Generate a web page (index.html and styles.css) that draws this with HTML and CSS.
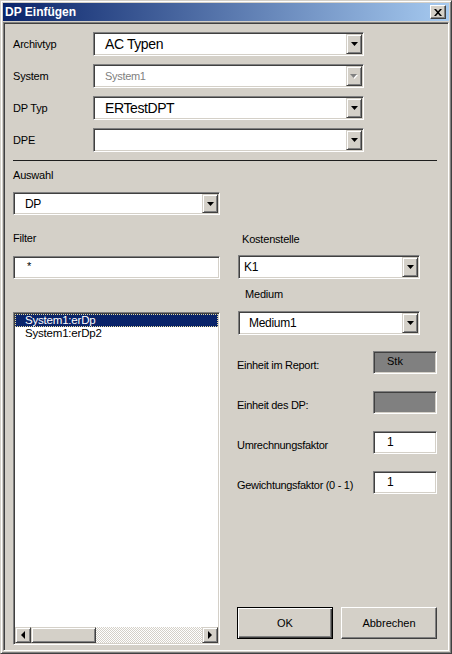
FILE: index.html
```html
<!DOCTYPE html>
<html lang="de">
<head>
  <meta charset="UTF-8">
  <meta name="viewport" content="width=device-width, initial-scale=1.0">
  <title>DP Einfügen</title>
  <link rel="stylesheet" href="styles.css">
</head>
<body>
  <div class="window">
    <div class="titlebar">
      <span class="title">DP Einfügen</span>
      <button type="button" class="close-btn">
        <svg width="8" height="7" viewBox="0 0 8 7"><path d="M0 0h2l2 2.3L6 0h2L5 3.5 8 7H6L4 4.7 2 7H0l3-3.5z" fill="#000"/></svg>
      </button>
    </div>

    <div class="client">
      <div class="field-row">
        <span class="field-label">Archivtyp</span>
        <div class="combo combo-wide">
          <span class="combo-value big">AC Typen</span>
          <span class="drop"><svg width="7" height="4" viewBox="0 0 7 4"><path d="M0 0h7L3.5 4z" fill="#000"/></svg></span>
        </div>
      </div>
      <div class="field-row">
        <span class="field-label">System</span>
        <div class="combo combo-wide">
          <span class="combo-value disabled">System1</span>
          <span class="drop"><svg width="8" height="5" viewBox="0 0 8 5"><path d="M1 1h7L4.5 5z" fill="#fff"/><path d="M0 0h7L3.5 4z" fill="#808080"/></svg></span>
        </div>
      </div>
      <div class="field-row">
        <span class="field-label">DP Typ</span>
        <div class="combo combo-wide">
          <span class="combo-value big">ERTestDPT</span>
          <span class="drop"><svg width="7" height="4" viewBox="0 0 7 4"><path d="M0 0h7L3.5 4z" fill="#000"/></svg></span>
        </div>
      </div>
      <div class="field-row">
        <span class="field-label">DPE</span>
        <div class="combo combo-wide">
          <span class="combo-value big"></span>
          <span class="drop"><svg width="7" height="4" viewBox="0 0 7 4"><path d="M0 0h7L3.5 4z" fill="#000"/></svg></span>
        </div>
      </div>

      <div class="separator"></div>

      <div class="lower">
        <div class="left-col">
          <span class="label label-auswahl">Auswahl</span>
          <div class="combo combo-dp">
            <span class="combo-value mid">DP</span>
            <span class="drop"><svg width="7" height="4" viewBox="0 0 7 4"><path d="M0 0h7L3.5 4z" fill="#000"/></svg></span>
          </div>
          <span class="label label-filter">Filter</span>
          <div class="edit filter-edit"><span class="edit-text">*</span></div>

          <div class="listbox">
            <div class="list-items">
              <div class="list-item selected">System1:erDp</div>
              <div class="list-item">System1:erDp2</div>
            </div>
            <div class="hscroll">
              <span class="scroll-btn"><i class="arrow-left"></i></span>
              <span class="scroll-thumb"></span>
              <span class="scroll-track"></span>
              <span class="scroll-btn"><i class="arrow-right"></i></span>
            </div>
          </div>
        </div>

        <div class="right-col">
          <span class="label label-kosten">Kostenstelle</span>
          <div class="combo combo-side combo-k1">
            <span class="combo-value mid">K1</span>
            <span class="drop"><svg width="7" height="4" viewBox="0 0 7 4"><path d="M0 0h7L3.5 4z" fill="#000"/></svg></span>
          </div>
          <span class="label label-medium">Medium</span>
          <div class="combo combo-side combo-medium">
            <span class="combo-value mid">Medium1</span>
            <span class="drop"><svg width="7" height="4" viewBox="0 0 7 4"><path d="M0 0h7L3.5 4z" fill="#000"/></svg></span>
          </div>

          <div class="value-row first">
            <span class="value-label">Einheit im Report:</span>
            <div class="edit value-box readonly"><span class="edit-text">Stk</span></div>
          </div>
          <div class="value-row">
            <span class="value-label">Einheit des DP:</span>
            <div class="edit value-box readonly"></div>
          </div>
          <div class="value-row">
            <span class="value-label">Umrechnungsfaktor</span>
            <div class="edit value-box"><span class="edit-text num">1</span></div>
          </div>
          <div class="value-row">
            <span class="value-label">Gewichtungsfaktor (0 - 1)</span>
            <div class="edit value-box"><span class="edit-text num">1</span></div>
          </div>

          <div class="buttons">
            <button type="button" class="btn btn-default">OK</button>
            <button type="button" class="btn">Abbrechen</button>
          </div>
        </div>
      </div>
    </div>
  </div>
</body>
</html>
```

FILE: styles.css
```css
* {
  box-sizing: border-box;
}
body {
  margin: 0;
  background: #d4d0c8;
  font-family: "Liberation Sans", Arial, sans-serif;
  font-size: 11px;
  color: #000;
}
.window {
  width: 452px;
  height: 654px;
  display: flex;
  flex-direction: column;
  border: 1px solid;
  border-color: #d4d0c8 #404040 #404040 #d4d0c8;
  box-shadow: inset 1px 1px #fff, inset -1px -1px #808080;
  padding: 2px;
  background: #d4d0c8;
}
.titlebar {
  height: 18px;
  flex: none;
  display: flex;
  align-items: center;
  justify-content: space-between;
  padding: 0 3px 0 2px;
  margin-bottom: 1px;
  background: linear-gradient(to right, #0a246a, #a6caf0);
}
.title {
  color: #fff;
  font-weight: bold;
  font-size: 12px;
}
.close-btn {
  width: 16px;
  height: 14px;
  padding: 0;
  display: flex;
  align-items: center;
  justify-content: center;
  background: #d4d0c8;
  border: 1px solid;
  border-color: #fff #404040 #404040 #fff;
  box-shadow: inset -1px -1px #808080;
}
.client {
  flex: 1;
  display: flex;
  flex-direction: column;
  border: 1px solid;
  border-color: #808080 #fff #fff #808080;
  box-shadow: inset 1px 1px #404040, inset -1px -1px #d4d0c8;
  padding: 9px 11px 5px 9px;
}

/* top rows */
.field-row {
  display: flex;
  align-items: center;
  height: 24px;
  margin-bottom: 8px;
}
.field-label {
  width: 80px;
  letter-spacing: -0.2px;
}
.label {
  display: block;
  line-height: 13px;
  letter-spacing: -0.2px;
}

/* classic sunken controls */
.combo, .edit, .listbox {
  background: #fff;
  border: 1px solid;
  border-color: #808080 #fff #fff #808080;
  box-shadow: inset 1px 1px #404040, inset -1px -1px #d4d0c8;
  padding: 1px;
}
.combo {
  display: flex;
  align-items: center;
  height: 24px;
}
.combo-wide {
  width: 271px;
}
.combo-value {
  flex: 1;
  padding-left: 10px;
  white-space: nowrap;
}
.combo-value.big {
  font-size: 14px;
  letter-spacing: -0.4px;
}
.combo-value.mid {
  font-size: 12px;
  letter-spacing: -0.3px;
}
.combo-value.disabled {
  color: #808080;
  letter-spacing: -0.3px;
}
.drop {
  width: 16px;
  height: 20px;
  display: flex;
  align-items: center;
  justify-content: center;
  background: #d4d0c8;
  border: 1px solid;
  border-color: #d4d0c8 #404040 #404040 #d4d0c8;
  box-shadow: inset 1px 1px #fff, inset -1px -1px #808080;
}

.separator {
  height: 1px;
  background: #1e1e1e;
}

.lower {
  flex: 1;
  display: flex;
  gap: 17px;
}
.left-col {
  width: 207px;
  display: flex;
  flex-direction: column;
}
.label-auswahl {
  margin-top: 8px;
}
.combo-dp {
  margin-top: 10px;
  height: 23px;
}
.combo-dp .drop {
  height: 19px;
}
.label-filter {
  margin-top: 17px;
}
.filter-edit {
  margin-top: 11px;
  height: 23px;
}
.edit-text {
  display: block;
  padding: 2px 0 0 12px;
  line-height: 13px;
}

.listbox {
  flex: 1;
  margin-top: 33px;
  display: flex;
  flex-direction: column;
}
.list-items {
  flex: 1;
}
.list-item {
  height: 13px;
  line-height: 13px;
  padding-left: 10px;
  font-size: 11.5px;
  letter-spacing: -0.2px;
  white-space: nowrap;
}
.list-item.selected {
  background: #0a246a;
  color: #fff;
  outline: 1px dotted #e6dca0;
  outline-offset: -1px;
}
.hscroll {
  height: 16px;
  display: flex;
}
.scroll-btn, .scroll-thumb {
  background: #d4d0c8;
  border: 1px solid;
  border-color: #d4d0c8 #404040 #404040 #d4d0c8;
  box-shadow: inset 1px 1px #fff, inset -1px -1px #808080;
}
.scroll-btn {
  width: 16px;
  display: flex;
  align-items: center;
  justify-content: center;
}
.scroll-thumb {
  width: 65px;
}
.scroll-track {
  flex: 1;
  background-color: #fff;
  background-image: repeating-conic-gradient(#d4d0c8 0 25%, #fff 0 50%);
  background-size: 2px 2px;
}
.arrow-left, .arrow-right {
  width: 0;
  height: 0;
  border-top: 4px solid transparent;
  border-bottom: 4px solid transparent;
}
.arrow-left {
  border-right: 4px solid #000;
}
.arrow-right {
  border-left: 4px solid #000;
}

/* right column */
.right-col {
  flex: 1;
  display: flex;
  flex-direction: column;
}
.label-kosten {
  margin-top: 72px;
  padding-left: 5px;
}
.combo-side {
  width: 182px;
  margin-left: 1px;
}
.combo-k1 {
  margin-top: 9px;
}
.combo-k1 .combo-value {
  padding-left: 4px;
}
.combo-medium .combo-value {
  padding-left: 9px;
}
.label-medium {
  margin-top: 9px;
  padding-left: 8px;
}
.combo-medium {
  margin-top: 10px;
}
.value-row {
  display: flex;
  justify-content: space-between;
  margin-top: 17px;
}
.value-row.first {
  margin-top: 16px;
}
.value-label {
  padding-top: 8px;
  line-height: 13px;
  letter-spacing: -0.3px;
  white-space: nowrap;
}
.value-box {
  width: 64px;
  height: 23px;
}
.value-box .edit-text {
  padding-left: 12px;
}
.value-box .num {
  font-size: 12px;
  padding-top: 3px;
}
.value-box.readonly {
  background: #808080;
}
.buttons {
  margin-top: auto;
  margin-bottom: 6px;
  display: flex;
  gap: 8px;
}
.btn {
  width: 96px;
  height: 32px;
  padding: 0;
  font-family: inherit;
  font-size: 11px;
  color: #000;
  background: #d4d0c8;
  border: 1px solid;
  border-color: #fff #404040 #404040 #fff;
  box-shadow: inset -1px -1px #808080;
}
.btn-default {
  border: 1px solid #000;
  box-shadow: inset 1px 1px #fff, inset -1px -1px #404040, inset -2px -2px #808080;
}
```
